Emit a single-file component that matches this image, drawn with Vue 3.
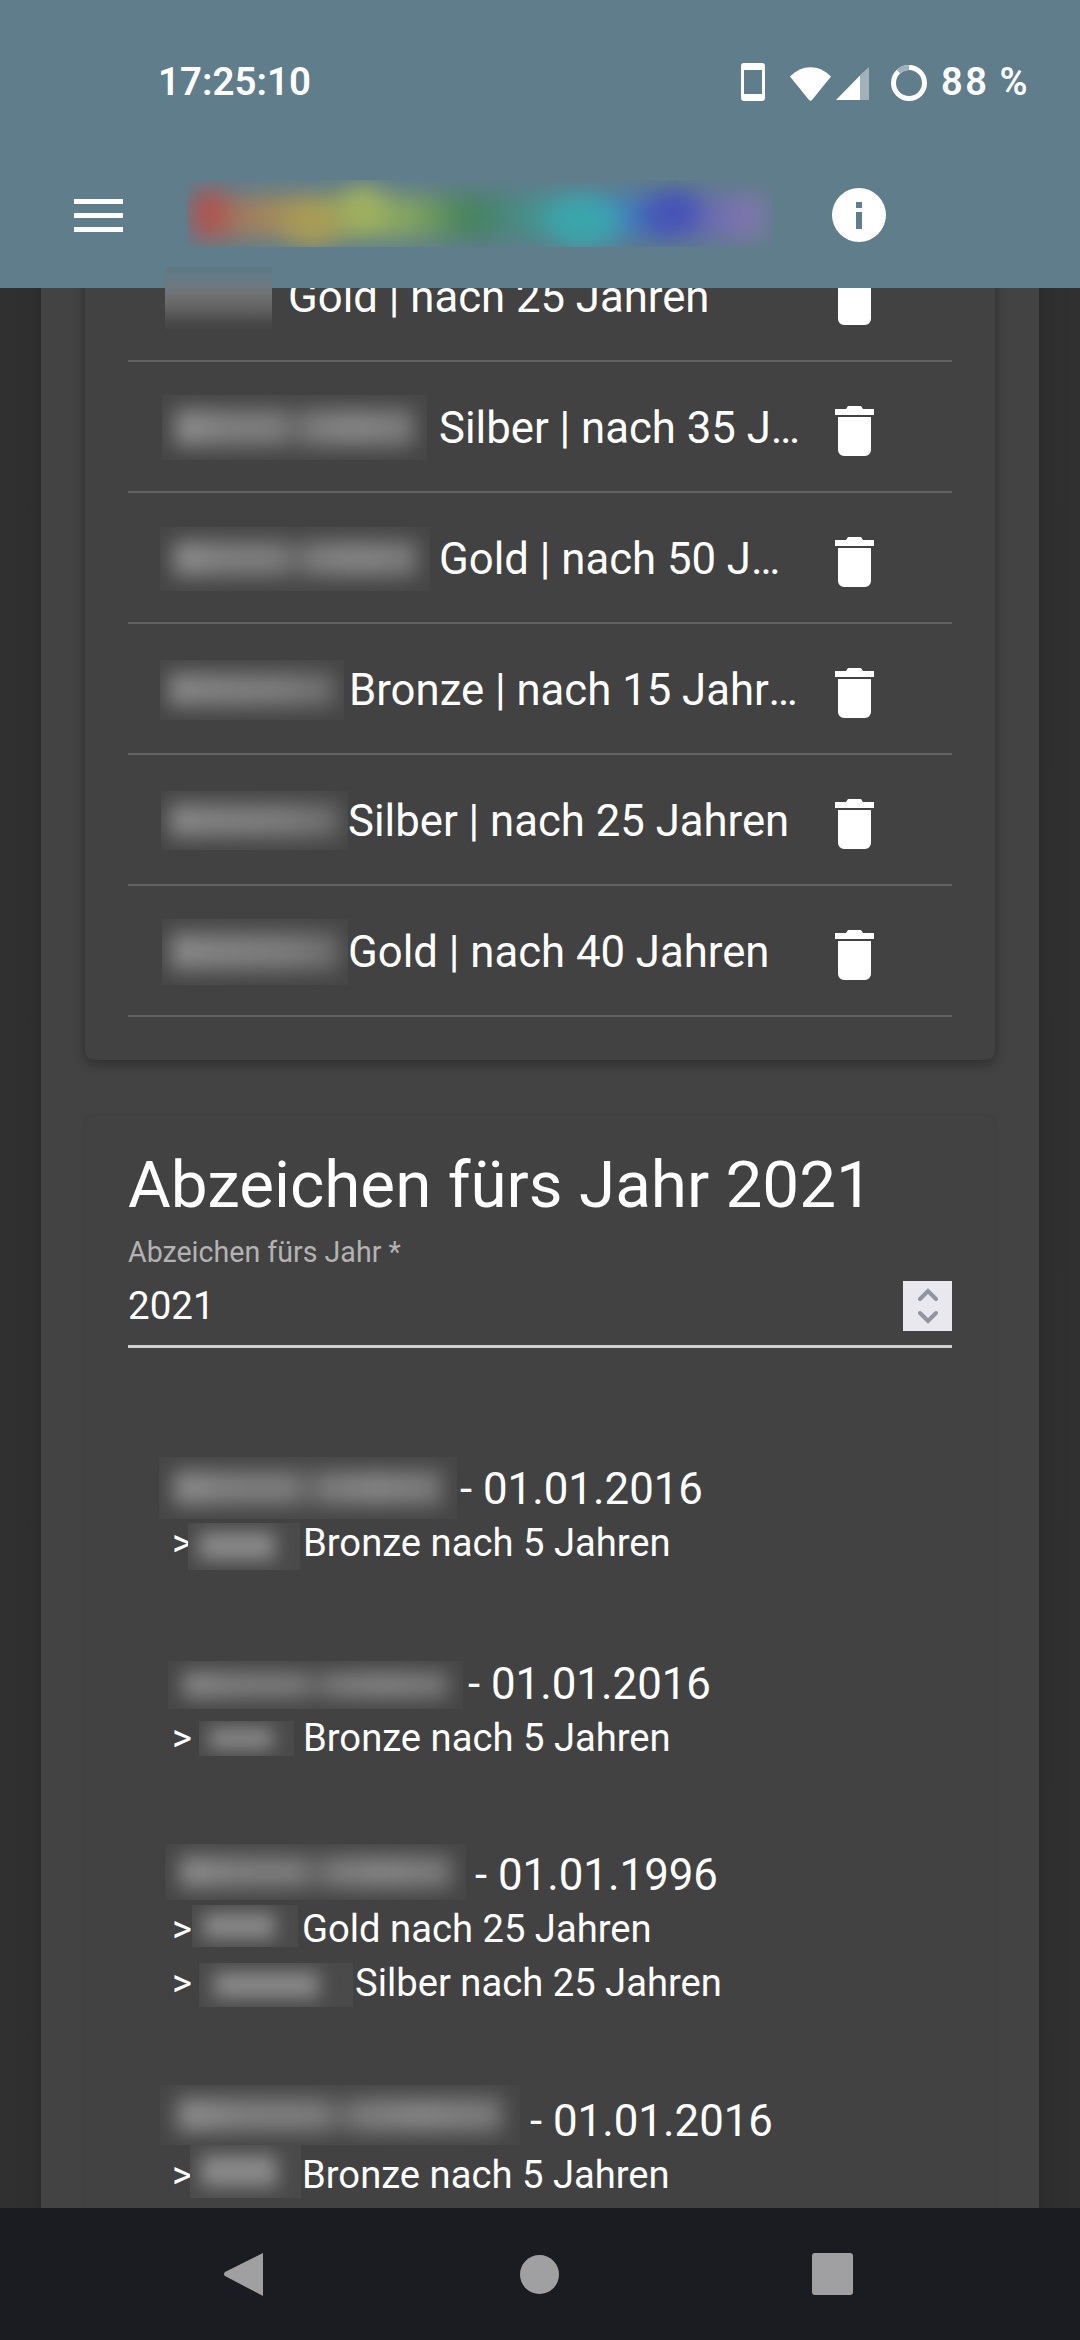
<script setup>
const rows = [
  { pad: 37, w: 107, h: 60, gap: 16, text: 'Gold | nach 25 Jahren', hidden: true },
  { pad: 34, w: 265, h: 65, gap: 12, text: 'Silber | nach 35 Jahren', two: true },
  { pad: 32, w: 270, h: 64, gap: 9, text: 'Gold | nach 50 Jahren', two: true },
  { pad: 32, w: 184, h: 60, gap: 5, text: 'Bronze | nach 15 Jahren' },
  { pad: 33, w: 187, h: 59, gap: 0, text: 'Silber | nach 25 Jahren' },
  { pad: 34, w: 186, h: 66, gap: 0, text: 'Gold | nach 40 Jahren' }
]
const people = [
  { pad: 31, w: 298, h: 62, gap: 3, dy: -1, date: '01.01.2016', height: 195, lines: [{ gapL: 0, w: 112, h: 47, dy: 3, text: 'Bronze nach 5 Jahren', tx: 3 }] },
  { pad: 40, w: 295, h: 48, gap: 5, dy: 1, date: '01.01.2016', height: 191, lines: [{ gapL: 11, w: 95, h: 35, dy: 0, text: 'Bronze nach 5 Jahren', tx: 9 }] },
  { pad: 37, w: 301, h: 56, gap: 9, dy: -3, date: '01.01.1996', height: 246, lines: [{ gapL: 4, w: 106, h: 42, dy: -3, text: 'Gold nach 25 Jahren', tx: 4 }, { gapL: 11, w: 154, h: 44, dy: 2, text: 'Silber nach 25 Jahren', tx: 2 }] },
  { pad: 32, w: 360, h: 60, gap: 10, dy: -6, date: '01.01.2016', height: 110, lines: [{ gapL: 2, w: 111, h: 53, dy: -4, text: 'Bronze nach 5 Jahren', tx: 1 }] }
]
</script>

<template>
  <div class="phone">
    <header class="appbar">
      <div class="status">
        <span class="clock">17:25:10</span>
        <div class="status-right">
          <svg class="ic-phone" width="24" height="38" viewBox="0 0 24 38"><path fill="#fff" fill-rule="evenodd" d="M3 0h18a3 3 0 0 1 3 3v32a3 3 0 0 1-3 3H3a3 3 0 0 1-3-3V3a3 3 0 0 1 3-3zM3 7v24h18V7z"/></svg>
          <svg class="ic-wifi" width="41" height="34" viewBox="0 0 41 34"><path fill="#fff" d="M0 9.500C12-3 29-3 41 9.500L22 33c-1 1-2 1-3 0z"/></svg>
          <svg class="ic-signal" width="33" height="33" viewBox="0 0 33 33"><path fill="#fff" fill-opacity=".4" d="M33 0v33H24V8z"/><path fill="#fff" d="M24 8.500V33H0z"/></svg>
          <svg class="ic-batt" width="36" height="36" viewBox="0 0 36 36"><circle cx="18" cy="18" r="15.500" fill="none" stroke="#fff" stroke-width="5"/><path d="M18 2.500A15.500 15.500 0 0 0 7.400 6.700" fill="none" stroke="#9fb1ba" stroke-width="5"/></svg>
          <span class="pct">88 %</span>
        </div>
      </div>
      <div class="toolbar">
        <svg class="menu" width="49" height="33" viewBox="0 0 49 33"><path fill="#fff" d="M0 0h49v5H0zM0 14h49v5H0zM0 28h49v5H0z"/></svg>
        <div class="title-blur" aria-hidden="true">
          <i class="strip"></i>
          <i class="spot s1"></i>
          <i class="spot s2"></i>
          <i class="spot s3"></i>
          <i class="spot s4"></i>
          <i class="spot s5"></i>
        </div>
        <svg class="info" width="54" height="54" viewBox="0 0 54 54"><path fill="#fff" fill-rule="evenodd" d="M27 0a27 27 0 1 1 0 54A27 27 0 0 1 27 0zM24 14v6h6v-6zM24 24v17h6V24z"/></svg>
      </div>
    </header>

    <div class="row-one-blur" aria-hidden="true"></div>

    <main class="content">
      <div class="section">
        <section class="card first">
          <div v-for="(r, i) in rows" :key="i" class="row" :style="{ paddingLeft: r.pad + 'px' }">
            <div v-if="r.hidden" class="spacer" :style="{ width: r.w + 'px' }"></div>
            <div v-else class="blur" :class="{ two: r.two }" :style="{ width: r.w + 'px', height: r.h + 'px' }"><i></i></div>
            <span class="row-text" :style="{ marginLeft: r.gap + 'px' }">{{ r.text }}</span>
            <svg class="trash" width="39" height="50" viewBox="0 0 39 50"><path fill="#fff" d="M0 3h11l2-3h13l2 3h11v6H0zM3 11h33v33a6 6 0 0 1-6 6H9a6 6 0 0 1-6-6z"/></svg>
          </div>
        </section>

        <section class="card second">
          <h1>Abzeichen fürs Jahr 2021</h1>
          <div class="field-label">Abzeichen fürs Jahr *</div>
          <div class="field">
            <span>2021</span>
            <div class="spin">
              <svg width="24" height="38" viewBox="0 0 24 38"><path fill="none" stroke="#93939f" stroke-width="4" stroke-linecap="round" d="M4 12 12 4l8 8M4 26l8 8 8-8"/></svg>
            </div>
          </div>

          <div class="people">
            <div v-for="(p, i) in people" :key="i" class="person" :style="{ height: p.height + 'px' }">
              <div class="person-head" :style="{ paddingLeft: p.pad + 'px' }">
                <div class="blur two" :style="{ width: p.w + 'px', height: p.h + 'px', marginTop: p.dy * 2 + 'px' }"><i></i></div>
                <span class="date" :style="{ marginLeft: p.gap + 'px' }">- {{ p.date }}</span>
              </div>
              <div v-for="(l, j) in p.lines" :key="j" class="line">
                <span class="gt">&gt;</span>
                <div class="blur small" :style="{ width: l.w + 'px', height: l.h + 'px', marginLeft: l.gapL + 'px', marginTop: l.dy * 2 + 'px' }"><i></i></div>
                <span class="line-text" :style="{ marginLeft: l.tx + 'px' }">{{ l.text }}</span>
              </div>
            </div>
          </div>
        </section>
      </div>
    </main>

    <nav class="navbar">
      <svg width="40" height="45" viewBox="0 0 40 45"><path fill="#a0a0a3" d="M39 1v43L1 24a2.500 2.500 0 0 1 0-4z"/></svg>
      <svg class="home" width="39" height="39" viewBox="0 0 39 39"><circle cx="19.500" cy="19.500" r="19.500" fill="#a0a0a3"/></svg>
      <svg width="41" height="42" viewBox="0 0 41 42"><rect width="41" height="42" rx="3" fill="#a0a0a3"/></svg>
    </nav>
  </div>
</template>

<style scoped>
.phone {
  width: 1080px;
  height: 2340px;
  position: relative;
  overflow: hidden;
  display: flex;
  flex-direction: column;
  background: linear-gradient(90deg, #303030 0, #2f2f2f 30px, #2b2b2b 41px, #2b2b2b 1039px, #2f2f2f 1050px, #303030 100%);
  font-family: Roboto, "Liberation Sans", sans-serif;
  color: #fff;
}
.appbar {
  height: 288px;
  flex: none;
  background: #607d8b;
  position: relative;
  z-index: 2;
}
.status {
  height: 142px;
  box-sizing: border-box;
  padding: 59px 50px 0 158px;
  display: flex;
  justify-content: space-between;
  align-items: flex-start;
}
.clock {
  font-size: 38.500px;
  font-weight: 600;
  line-height: 46px;
}
.status-right {
  display: flex;
  align-items: center;
  height: 46px;
}
.ic-phone { margin-right: 25px; }
.ic-wifi { margin-top: 3px; }
.ic-signal { margin-left: 5px; margin-right: 22px; margin-top: 3px; }
.ic-batt { margin-top: 2px; }
.pct {
  font-size: 38px;
  font-weight: 600;
  margin-left: 14px;
  letter-spacing: 2.500px;
  word-spacing: -2px;
}
.toolbar {
  height: 146px;
  display: flex;
  align-items: center;
  padding-left: 74px;
}
.title-blur {
  width: 585px;
  height: 67px;
  margin-left: 64px;
  margin-top: -3px;
  position: relative;
  overflow: hidden;
  flex: none;
}
.strip {
  position: absolute;
  left: 8px;
  right: 8px;
  top: 16px;
  height: 42px;
  filter: blur(12px);
  background: linear-gradient(90deg, #b5524f 0, #a07a60 8%, #a89a55 19%, #9aae5e 30%, #84a462 38%, #44825a 48%, #4b8880 56%, #3aa6ac 66%, #3f8fbb 74%, #4656b8 82%, #6a6cb0 90%, #8a78b0 100%);
}
.spot {
  position: absolute;
  border-radius: 50%;
  filter: blur(11px);
  opacity: .8;
}
.s1 { left: 10px; top: 10px; width: 26px; height: 42px; background: #b24f4c; }
.s2 { left: 155px; top: 6px; width: 42px; height: 38px; background: #a5b460; }
.s3 { left: 100px; top: 30px; width: 50px; height: 36px; background: #ac9c55; }
.s4 { left: 365px; top: 20px; width: 65px; height: 47px; background: #3aa8ac; }
.s5 { left: 465px; top: 12px; width: 48px; height: 38px; background: #4351b8; }
.info { margin-left: 60px; }
.row-one-blur {
  position: absolute;
  left: 165px;
  top: 267px;
  width: 107px;
  height: 63px;
  z-index: 3;
  background: linear-gradient(180deg, #5e7885 0, #667a85 18%, #6f777b 35%, #6c6c6c 52%, #5c5c5c 72%, #484848 90%, #444 100%);
}
.content {
  flex: 1;
  min-height: 0;
  overflow: hidden;
  position: relative;
}
.section {
  margin: -60px 41px 0;
  padding: 0 44px;
  background: #434343;
  height: 2100px;
}
.card {
  background: #424242;
  border-radius: 9px;
  padding: 0 43px;
  box-sizing: border-box;
}
.card.first {
  height: 832px;
  padding-top: 3px;
  box-shadow: 0 4px 12px rgba(0, 0, 0, .32);
}
.card.second {
  margin-top: 55px;
  height: 1200px;
  padding-top: 32px;
  box-shadow: 0 0 4px rgba(0, 0, 0, .1);
}
.row {
  height: 131px;
  box-sizing: border-box;
  border-bottom: 2px solid #616161;
  display: flex;
  align-items: center;
  padding-top: 2px;
}
.spacer { flex: none; }
.row-text {
  font-size: 43.700px;
  white-space: nowrap;
  overflow: hidden;
  text-overflow: ellipsis;
  flex: 1;
  min-width: 0;
}
.trash { margin: 6px 78px 0 32px; flex: none; }
.blur {
  flex: none;
  overflow: hidden;
  position: relative;
  background: #464646;
}
.blur i {
  position: absolute;
  inset: 22% 5%;
  background: linear-gradient(90deg, #8c8c8c 0, #828282 18%, #7c7c7c 70%, #6a6a6a 100%);
  filter: blur(10px);
}
.blur.two i {
  background: linear-gradient(90deg, #8e8e8e 0, #7e7e7e 20%, #7c7c7c 44%, #606060 50%, #7a7a7a 56%, #848484 75%, #787878 100%);
}
.blur.small { background: #4a4a4a; }
.blur.small i {
  inset: 20% 22% 20% 10%;
  background: #8a8a8a;
  filter: blur(9px);
}
h1 {
  margin: 0;
  font-size: 65.600px;
  font-weight: 400;
  line-height: 76px;
}
.field-label {
  margin-top: 12px;
  font-size: 28.600px;
  line-height: 34px;
  color: #b3b3b3;
}
.field {
  height: 67px;
  box-sizing: border-box;
  margin-top: 12px;
  border-bottom: 3px solid #d0d0d0;
  display: flex;
  justify-content: space-between;
  align-items: flex-start;
  font-size: 38.500px;
}
.field span { line-height: 50px; }
.spin {
  width: 49px;
  height: 50px;
  background: #e8e8ee;
  display: flex;
  align-items: center;
  justify-content: center;
}
.people { margin-top: 114px; }
.person-head {
  display: flex;
  align-items: center;
  height: 54px;
}
.date {
  font-size: 43.800px;
  white-space: nowrap;
}
.line {
  display: flex;
  align-items: center;
  height: 54px;
  padding-left: 45px;
}
.gt { font-size: 38.200px; width: 15px; margin-left: -1px; margin-right: 1px; flex: none; }
.line-text { font-size: 38.200px; white-space: nowrap; }
.navbar {
  position: absolute;
  left: 0;
  right: 0;
  bottom: 0;
  height: 132px;
  z-index: 3;
  background: #1b1b22;
  display: flex;
  align-items: center;
  justify-content: space-between;
  padding: 0 227px 0 224px;
  box-sizing: border-box;
}
.home { margin-left: 3px; }
</style>

<style>
html, body { margin: 0; background: #303030; }
</style>
